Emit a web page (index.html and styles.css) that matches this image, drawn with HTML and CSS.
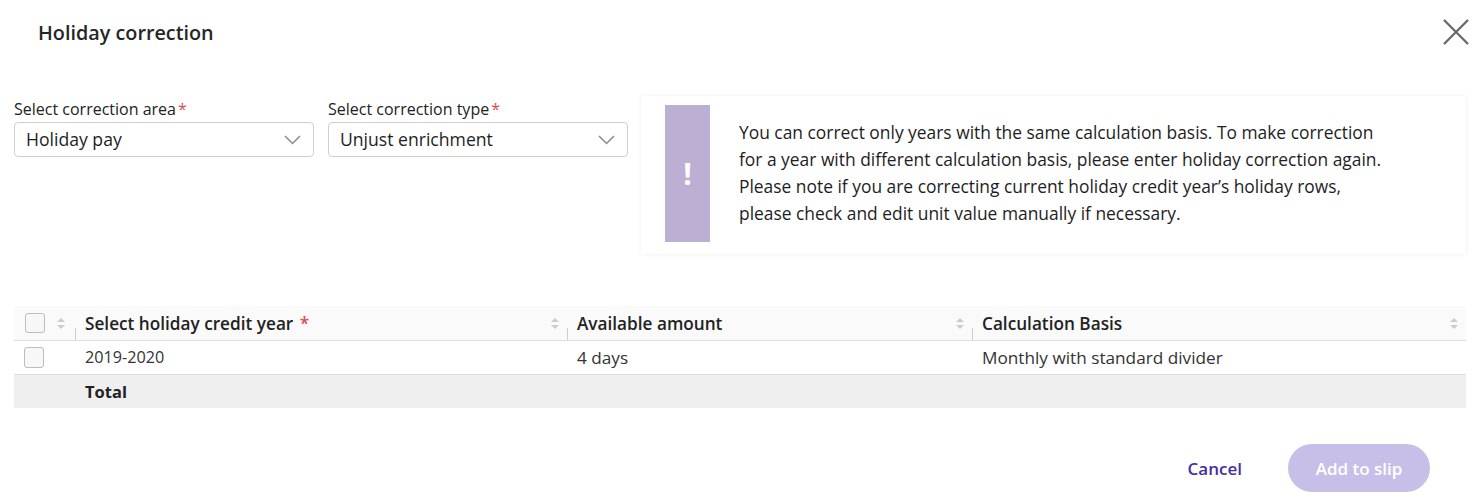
FILE: index.html
```html
<!DOCTYPE html>
<html lang="en">
<head>
<meta charset="utf-8">
<title>Holiday correction</title>
<link rel="stylesheet" href="styles.css">
</head>
<body>
<div class="dialog">
  <header class="dialog-header">
    <h1 class="dialog-title">Holiday correction</h1>
    <button class="close-btn" aria-label="Close">
      <svg width="28" height="28" viewBox="0 0 28 28"><path d="M2 2 L26 26 M26 2 L2 26" stroke="#666" stroke-width="2.2" fill="none"/></svg>
    </button>
  </header>

  <div class="top-row">
    <div class="field">
      <label class="field-label">Select correction area<span class="req">*</span></label>
      <div class="select">
        <span>Holiday pay</span>
        <svg class="chev" width="17" height="10" viewBox="0 0 17 10"><path d="M1 1 L8.5 8.5 L16 1" stroke="#8a8a8a" stroke-width="1.5" fill="none"/></svg>
      </div>
    </div>
    <div class="field">
      <label class="field-label">Select correction type<span class="req">*</span></label>
      <div class="select">
        <span>Unjust enrichment</span>
        <svg class="chev" width="17" height="10" viewBox="0 0 17 10"><path d="M1 1 L8.5 8.5 L16 1" stroke="#8a8a8a" stroke-width="1.5" fill="none"/></svg>
      </div>
    </div>
    <div class="alert">
      <div class="alert-bar"><span class="bang">!</span></div>
      <p class="alert-text">You can correct only years with the same calculation basis. To make correction<br>for a year with different calculation basis, please enter holiday correction again.<br>Please note if you are correcting current holiday credit year’s holiday rows,<br>please check and edit unit value manually if necessary.</p>
    </div>
  </div>

  <div class="table">
    <div class="tr thead">
      <div class="td c0"><span class="cb cb-h"></span><span class="sort"></span></div>
      <div class="td c1"><span class="div"></span><span>Select holiday credit year <span class="req">*</span></span><span class="sort"></span></div>
      <div class="td c2"><span class="div"></span><span>Available amount</span><span class="sort"></span></div>
      <div class="td c3"><span class="div"></span><span>Calculation Basis</span><span class="sort"></span></div>
    </div>
    <div class="tr tbody">
      <div class="td c0"><span class="cb"></span></div>
      <div class="td c1 num">2019-2020</div>
      <div class="td c2">4 days</div>
      <div class="td c3">Monthly with standard divider</div>
    </div>
    <div class="tr tfoot">
      <div class="td c0"></div>
      <div class="td c1">Total</div>
      <div class="td c2"></div>
      <div class="td c3"></div>
    </div>
  </div>

  <footer class="actions">
    <button class="btn-cancel">Cancel</button>
    <button class="btn-primary" disabled>Add to slip</button>
  </footer>
</div>
</body>
</html>
```

FILE: styles.css
```css
* { box-sizing: border-box; }
html, body { margin: 0; padding: 0; background: #fff; }
body {
  font-family: "Open Sans", "Noto Sans", "Liberation Sans", sans-serif;
  color: #222;
  width: 1480px;
  height: 499px;
  overflow: hidden;
}
.dialog { padding: 0 14px; }

.dialog-header {
  height: 64px;
  display: flex;
  align-items: center;
  justify-content: space-between;
  padding-left: 24px;
}
.dialog-title {
  margin: 0;
  font-size: 19.8px;
  font-weight: 600;
  color: #262626;
}
.close-btn {
  border: 0;
  background: none;
  padding: 0;
  margin-right: -4px;
  width: 28px;
  height: 28px;
  display: flex;
}

.top-row {
  margin-top: 32px;
  display: flex;
  align-items: flex-start;
}
.field {
  width: 300px;
  margin-right: 14px;
  padding-top: 3px;
}
.field:nth-child(2) { margin-right: 13px; }
.field-label {
  display: block;
  font-size: 16px;
  line-height: 20px;
  height: 23px;
  color: #222;
}
.req { color: #e5484d; margin-left: 2px; }
.select {
  height: 35px;
  border: 1px solid #cfcfcf;
  border-radius: 4px;
  display: flex;
  align-items: center;
  justify-content: space-between;
  padding: 0 12px 0 11px;
  font-size: 17.6px;
  color: #1e1e1e;
}
.select span { margin-top: -2px; }
.chev { margin-top: 1px; }

.alert {
  flex: 1;
  height: 158px;
  display: flex;
  align-items: center;
  padding: 0 24px;
  box-shadow: 0 0 4px rgba(0,0,0,0.07);
  background: #fff;
}
.alert-bar {
  width: 45px;
  height: 137px;
  margin-top: -3px;
  background: #bdaed3;
  display: flex;
  align-items: center;
  justify-content: center;
}
.bang {
  color: #fff;
  font-weight: 700;
  font-size: 30px;
  line-height: 1;
}
.alert-text {
  margin: -4px 0 0 29px;
  font-size: 17.4px;
  line-height: 27px;
  color: #1e1e1e;
}

.table { margin-top: 52px; }
.tr { display: grid; grid-template-columns: 61px 492px 405px 1fr; }
.td {
  display: flex;
  align-items: center;
  position: relative;
  padding-left: 10px;
  font-size: 17.2px;
}
.thead { background: #fafafa; height: 35px; border-bottom: 1px solid #ddd; }
.thead .td { font-weight: 600; padding-right: 8px; justify-content: space-between; }
.tbody { height: 34px; border-bottom: 1px solid #ddd; color: #333; }
.tbody .td { margin-top: -1px; }
.tbody .num { font-size: 16.2px; }
.tfoot { height: 33px; background: #efefef; }
.tfoot .c1 { font-weight: 700; font-size: 16.5px; }
.c0 { padding-left: 10px; }
.thead .c0 { padding-left: 11px; justify-content: flex-start; gap: 12px; }
.div {
  position: absolute;
  left: 0;
  bottom: 0;
  width: 1px;
  height: 12px;
  background: #cfcfcf;
}
.cb {
  width: 20px;
  height: 21px;
  border: 1px solid #bdbdbd;
  border-radius: 3px;
  background: #f7f7f7;
  display: inline-block;
}
.cb-h { height: 20px; }
.sort {
  width: 8px;
  height: 11px;
  position: relative;
  display: inline-block;
}
.sort::before, .sort::after {
  content: "";
  position: absolute;
  left: 0;
  border-left: 4px solid transparent;
  border-right: 4px solid transparent;
}
.sort::before { top: 0; border-bottom: 4px solid #cccccc; }
.sort::after { bottom: 0; border-top: 4px solid #cccccc; }

.actions {
  display: flex;
  justify-content: flex-end;
  align-items: center;
  margin-top: 36px;
  padding-right: 36px;
  gap: 30px;
}
.btn-cancel {
  border: 0;
  background: none;
  font-family: inherit;
  font-size: 17px;
  font-weight: 600;
  color: #4a2ba6;
  padding: 0 16px;
  height: 48px;
}
.btn-primary {
  border: 0;
  font-family: inherit;
  font-size: 17px;
  font-weight: 600;
  color: #fff;
  background: #c8bfe8;
  height: 48px;
  width: 142px;
  border-radius: 24px;
}
```
